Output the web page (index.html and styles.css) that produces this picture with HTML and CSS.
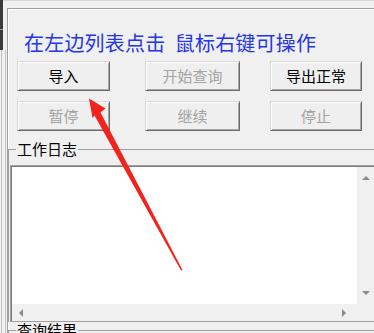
FILE: index.html
```html
<!DOCTYPE html>
<html lang="zh-CN">
<head>
<meta charset="utf-8">
<link rel="stylesheet" href="styles.css">
</head>
<body>
<div class="page">
  <div class="rail">
    <div class="rail-block"><div class="rail-notch"></div></div>
    <div class="rail-lines"></div>
  </div>
  <div class="main">
    <div class="topline"></div>
    <div class="group">
      <div class="hint">在左边列表点击&nbsp;&nbsp;鼠标右键可操作</div>
      <div class="buttons">
        <button class="btn">导入</button>
        <button class="btn disabled">开始查询</button>
        <button class="btn">导出正常</button>
        <button class="btn disabled">暂停</button>
        <button class="btn disabled">继续</button>
        <button class="btn disabled">停止</button>
      </div>
      <fieldset class="box log">
        <legend class="box-title">工作日志</legend>
        <div class="panel">
          <div class="text-area"></div>
          <div class="vscroll"><span class="arr up"></span><span class="arr down"></span></div>
          <div class="hscroll"><span class="arr left"></span><span class="arr right"></span></div>
          <div class="corner"></div>
        </div>
      </fieldset>
      <fieldset class="box result">
        <legend class="box-title">查询结果</legend>
      </fieldset>
    </div>
  </div>
</div>
<svg class="pointer" width="374" height="333" viewBox="0 0 374 333">
  <polygon points="89,98.5 105.5,108.5 100.5,112.5 182.5,270 181,270.5 94.5,115.5 92.5,118" fill="#f2231c"/>
</svg>
</body>
</html>
```
FILE: styles.css
```css
html, body {
  margin: 0;
  padding: 0;
}
body {
  width: 374px;
  height: 333px;
  overflow: hidden;
  background: #f0f0f0;
  font-family: "Noto Sans CJK SC", "Noto Sans", sans-serif;
  position: relative;
}
.page {
  display: flex;
  width: 392px;
  height: 333px;
}
.rail {
  width: 7px;
  flex: none;
  display: flex;
  flex-direction: column;
}
.rail-block {
  width: 3px;
  height: 50px;
  background: #3a3a3a;
  padding-top: 29px;
  box-sizing: border-box;
}
.rail-notch {
  height: 1px;
  background: #9a9a9a;
}
.rail-lines {
  flex: 1;
  width: 3px;
  margin-left: 1px;
  border-left: 1px solid #c4c4c4;
  border-right: 1px solid #c4c4c4;
}
.main {
  flex: 1;
  display: flex;
  flex-direction: column;
  margin-left: -4px;
}
.topline {
  height: 4px;
  border-bottom: 1px solid #d6d6d6;
  margin-bottom: 7px;
}
.group {
  flex: 1;
  margin-left: 4px;
  border-top: 1px solid #a0a0a0;
  border-left: 1px solid #a0a0a0;
  box-shadow: inset 1px 1px 0 #ffffff;
  display: flex;
  flex-direction: column;
}
.hint {
  margin-top: 22px;
  padding-left: 16px;
  font-size: 20px;
  line-height: 24px;
  color: #2536e6;
  white-space: nowrap;
  letter-spacing: 0.2px;
}
.buttons {
  margin-top: 6px;
  padding-left: 9px;
  display: grid;
  grid-template-columns: 93px 35px 95px 30px 92px;
  grid-auto-rows: 30px;
  row-gap: 10px;
}
.btn {
  margin: 0;
  padding: 0;
  font-family: inherit;
  font-size: 15px;
  line-height: 18px;
  color: #000;
  background: #efefef;
  border: 1px solid;
  border-color: #d9d9d9 #6a6a6a #6a6a6a #d9d9d9;
  box-shadow: inset 1px 1px 0 #ffffff, inset -1px -1px 0 #a8a8a8;
}
.btn:nth-child(3n+1) {
  grid-column: 1;
}
.btn:nth-child(3n+2) {
  grid-column: 3;
}
.btn:nth-child(3n) {
  grid-column: 5;
}
.btn.disabled {
  color: #a3a3a3;
}
.box {
  margin: 0;
  padding: 0 0 0 1px;
  border: none;
  border-top: 1px solid #a0a0a0;
  border-left: 1px solid #a0a0a0;
  min-width: 0;
}
.log {
  margin-top: 10px;
}
.box-title {
  margin-left: 6px;
  padding: 0 1px;
  font-size: 15px;
  line-height: 16px;
  color: #000;
}
.panel {
  margin-top: 8px;
  width: 362px;
  border: 1px solid #a0a0a0;
  border-right: none;
  box-shadow: inset 1px 1px 0 #7c7c7c;
  padding: 1px 0 0 1px;
  display: grid;
  grid-template-columns: 345px 17px;
  grid-template-rows: 137px 17px;
}
.text-area {
  background: #ffffff;
}
.vscroll, .hscroll, .corner {
  background: #f0f0f0;
}
.vscroll {
  display: flex;
  flex-direction: column;
  justify-content: space-between;
  align-items: center;
  padding: 9px 0;
}
.hscroll {
  display: flex;
  justify-content: space-between;
  align-items: center;
  padding: 0 11px 0 7px;
}
.arr {
  width: 0;
  height: 0;
  border: 4px solid transparent;
}
.arr.up {
  border-bottom: 4px solid #8a8a8a;
  border-top-width: 0;
}
.arr.down {
  border-top: 4px solid #8a8a8a;
  border-bottom-width: 0;
}
.arr.left {
  border-right: 4px solid #8a8a8a;
  border-left-width: 0;
}
.arr.right {
  border-left: 4px solid #8a8a8a;
  border-right-width: 0;
}
.result {
  margin-top: 0;
  min-height: 20px;
}
.pointer {
  position: absolute;
  left: 0;
  top: 0;
  pointer-events: none;
}
```
